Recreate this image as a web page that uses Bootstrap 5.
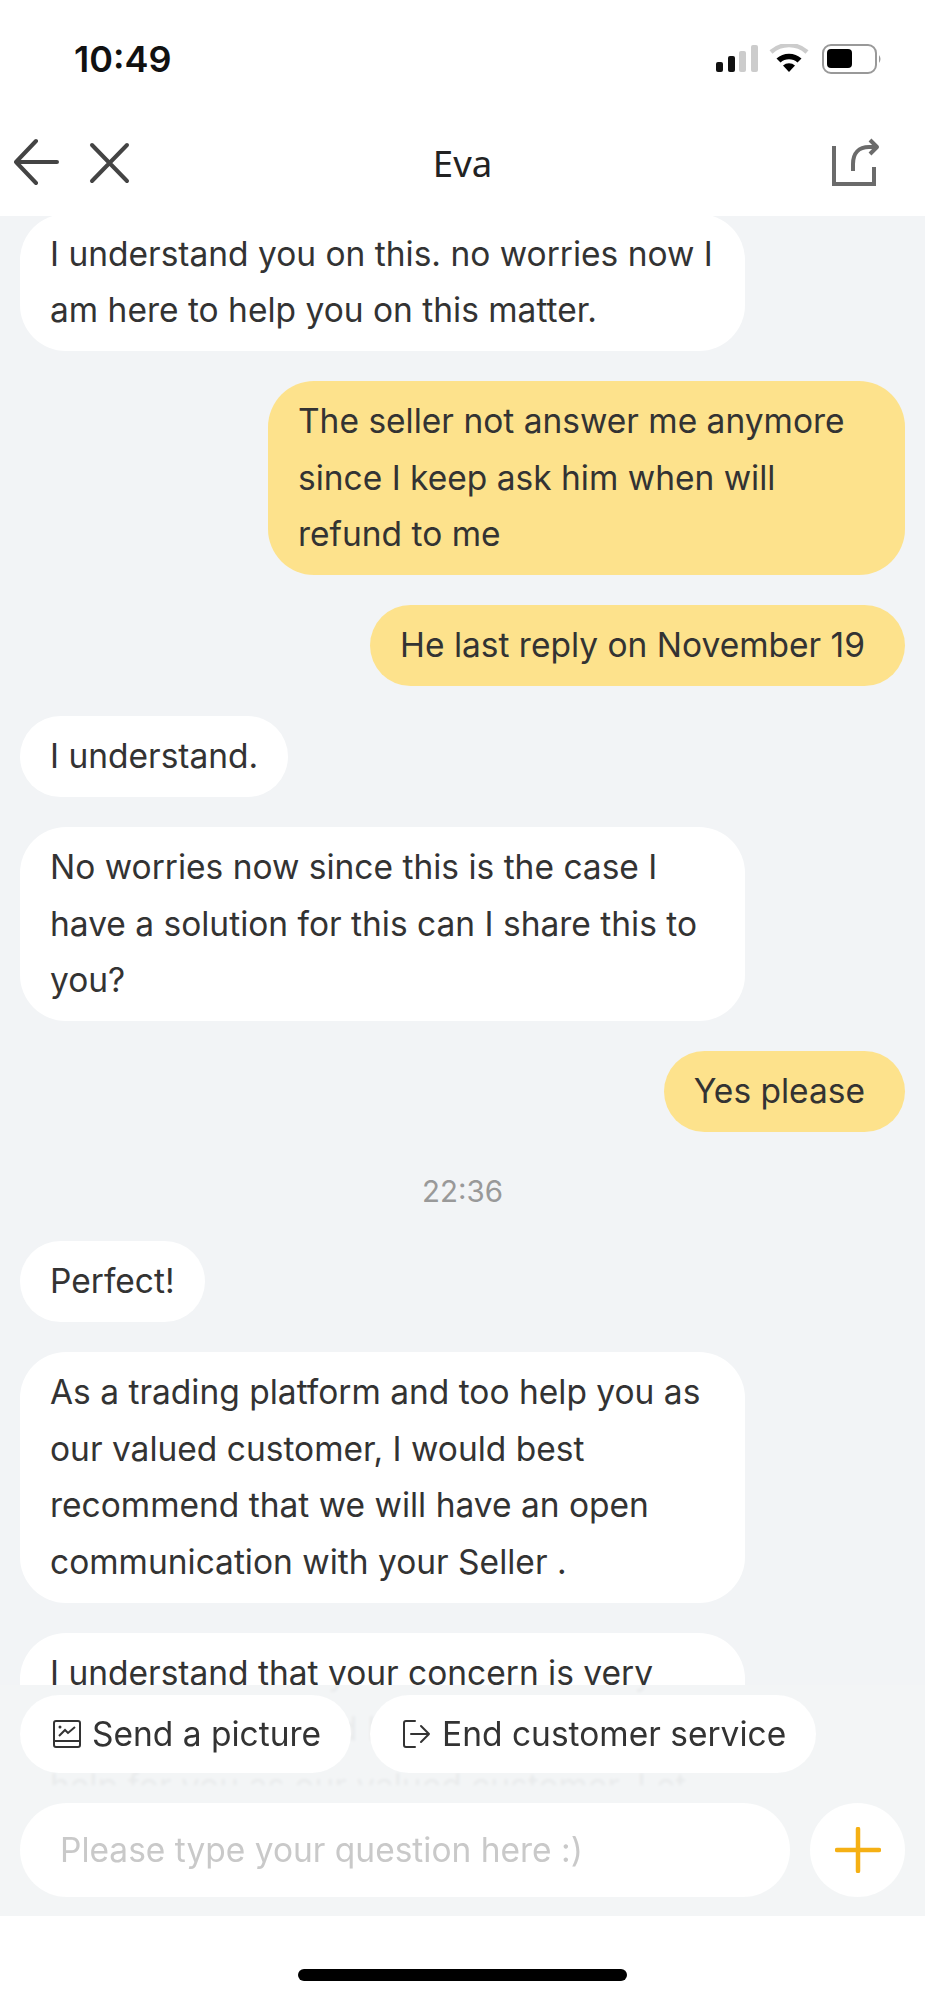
<!DOCTYPE html>
<html lang="en">
<head>
  <meta charset="UTF-8">
  <title>Eva</title>
  <meta name="viewport" content="width=device-width, initial-scale=1">
  <link rel="stylesheet" href="https://cdn.jsdelivr.net/npm/bootstrap@5.3.0/dist/css/bootstrap.min.css">
  <style>
    body { background: #fff; font-family: Inter, "Liberation Sans", sans-serif; color: #333; }
    .phone { width: 925px; height: 2000px; position: relative; overflow: hidden; }
    .status-bar { height: 118px; padding: 0 44px 0 74px; }
    .status-time { font-size: 36px; font-weight: 600; color: #111; line-height: 1; }
    .chat-head { height: 98px; padding: 19px 45px 0 14px; position: relative; }
    .chat-title { position: absolute; left: 0; right: 0; text-align: center; font-family: "Noto Sans", sans-serif; font-size: 36.5px; color: #222; line-height: 90px; top: 0; }
    .chat-area { height: 1700px; background: #f2f4f6; }
    .msg-clip { height: 1569px; overflow: hidden; padding: 0 20px; }
    .msg-list { margin-top: -2.5px; }
    .bubble { font-size: 33.5px; line-height: 56.5px; padding: 12.25px 30px; border-radius: 46px; background: #fff; white-space: nowrap; margin-bottom: 30px; width: fit-content; }
    .bubble-wide { width: 725px; }
    .bubble-me { background: #fde28c; margin-left: auto; padding-right: 40px; }
    .bubble-mid { width: 637px; }
    .msg-time { font-size: 29.5px; color: #999; text-align: center; height: 109px; line-height: 118px; margin-top: -30px; }
    .dock { position: absolute; left: 0; right: 0; top: 1685px; height: 231px; background: rgba(242, 244, 246, .95); backdrop-filter: blur(1.5px); padding: 10px 20px 0; }
    .pill-row { gap: 19px; margin-bottom: 30px; }
    .pill-btn { height: 78px; border-radius: 40px; background: rgba(255, 255, 255, .99); font-size: 33.5px; color: #333; border: 0; padding: 0 30px 0 33px; gap: 11px; }
    .dock-input { width: 770px; height: 94px; border-radius: 47px; border: 0; background: #fff; font-size: 33.5px; padding: 0 40px; color: #333; }
    .dock-input::placeholder { color: #c9c9c9; opacity: 1; }
    .dock-plus { width: 95px; height: 94px; border-radius: 50%; background: #fff; border: 0; padding: 0; }
    .home-wrap { height: 84px; padding-top: 53px; }
    .home-bar { width: 329px; height: 12px; border-radius: 6px; background: #000; }
  </style>
</head>
<body>
  <div class="phone">
    <div class="status-bar d-flex align-items-center justify-content-between">
      <span class="status-time">10:49</span>
      <svg width="165" height="30" viewBox="0 0 165 30">
        <rect x="0" y="18" width="7" height="10" rx="2" fill="#111"/>
        <rect x="12" y="12" width="7" height="16" rx="2" fill="#111"/>
        <rect x="23" y="7" width="7" height="21" rx="2" fill="#ccc"/>
        <rect x="35" y="1" width="7" height="27" rx="2" fill="#ccc"/>
        <path d="M55 8 A27 27 0 0 1 91 8" fill="none" stroke="#ccc" stroke-width="4.5"/>
        <path d="M60.500 14.500 A19 19 0 0 1 85.500 14.500 L81.500 18.500 A13 13 0 0 0 64.500 18.500 Z" fill="#000"/>
        <path d="M67 21.500 A9 9 0 0 1 79 21.500 L73 28 Z" fill="#000"/>
        <rect x="107" y="1" width="53" height="28" rx="8" fill="none" stroke="#999" stroke-width="2"/>
        <rect x="111" y="5" width="25" height="19" rx="4" fill="#000"/>
        <path d="M163 11 Q166 15 163 19 Z" fill="#999"/>
      </svg>
    </div>
    <div class="chat-head d-flex align-items-start justify-content-between">
      <svg width="118" height="50" viewBox="0 0 118 50" fill="none" stroke="#444" stroke-width="4" stroke-linecap="round" stroke-linejoin="round">
        <path d="M22 4 L2 25 L22 46 M2 25 H43"/>
        <path d="M78 8 L113 44 M113 8 L78 44"/>
      </svg>
      <div class="chat-title">Eva</div>
      <svg width="50" height="50" viewBox="0 0 50 50" fill="none" stroke="#6b6b6b" stroke-width="4">
        <path d="M4 9 V47 H44 V30"/>
        <path d="M23 34 V27 C23 16 29 10 39 10 H47"/>
        <path d="M40 3 L47 10 L40 17" stroke-linejoin="round"/>
      </svg>
    </div>
    <div class="chat-area">
      <div class="msg-clip">
        <div class="msg-list">
          <div class="bubble bubble-wide">I understand you on this. no worries now I<br>am here to help you on this matter.</div>
          <div class="bubble bubble-me bubble-mid">The seller not answer me anymore<br>since I keep ask him when will<br>refund to me</div>
          <div class="bubble bubble-me">He last reply on November 19</div>
          <div class="bubble">I understand.</div>
          <div class="bubble bubble-wide">No worries now since this is the case I<br>have a solution for this can I share this to<br>you?</div>
          <div class="bubble bubble-me">Yes please</div>
          <div class="msg-time">22:36</div>
          <div class="bubble">Perfect!</div>
          <div class="bubble bubble-wide">As a trading platform and too help you as<br>our valued customer, I would best<br>recommend that we will have an open<br>communication with your Seller .</div>
          <div class="bubble bubble-wide">I understand that your concern is very<br>important to us and I would like to be of<br>help for you as our valued customer. Let</div>
        </div>
      </div>
    </div>
    <div class="dock">
      <div class="d-flex pill-row">
        <button class="pill-btn d-flex align-items-center" type="button">
          <svg width="28" height="28" viewBox="0 0 28 28" fill="none" stroke="#333" stroke-width="2">
            <rect x="1" y="1" width="26" height="26" rx="2"/>
            <path d="M1 21 H27"/>
            <path d="M6 16 L12 10 L15 13 L22 7"/>
            <circle cx="7" cy="7" r="1.500" fill="#333" stroke="none"/>
          </svg>
          Send a picture
        </button>
        <button class="pill-btn d-flex align-items-center" type="button">
          <svg width="28" height="28" viewBox="0 0 28 28" fill="none" stroke="#333" stroke-width="2" stroke-linecap="round" stroke-linejoin="round">
            <path d="M12 1 H3 Q1 1 1 3 V25 Q1 27 3 27 H12"/>
            <path d="M8 14 H26 M18 6 L26 14 L18 22"/>
          </svg>
          End customer service
        </button>
      </div>
      <div class="d-flex justify-content-between">
        <input class="dock-input" type="text" placeholder="Please type your question here :)">
        <button class="dock-plus d-flex align-items-center justify-content-center" type="button">
          <svg width="46" height="46" viewBox="0 0 46 46" stroke="#f5b014" stroke-width="4.5" stroke-linecap="round">
            <path d="M23 2 V44 M2 23 H44"/>
          </svg>
        </button>
      </div>
    </div>
    <div class="home-wrap">
      <div class="home-bar mx-auto"></div>
    </div>
  </div>
  <script src="https://cdn.jsdelivr.net/npm/bootstrap@5.3.0/dist/js/bootstrap.bundle.min.js"></script>
</body>
</html>
